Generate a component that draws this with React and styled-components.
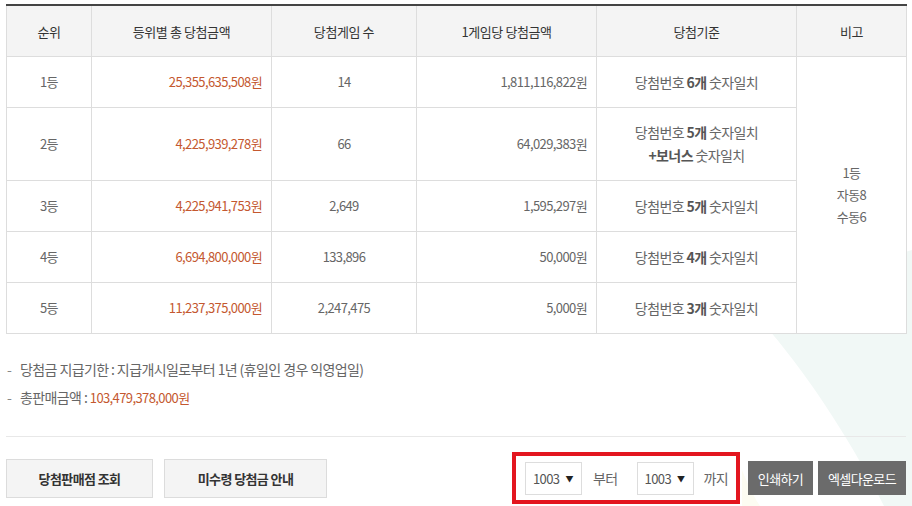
import React from 'react';
import styled, { createGlobalStyle } from 'styled-components';

const GlobalStyle = createGlobalStyle`
  html, body { margin: 0; padding: 0; background: #fff; }
  body {
    font-family: "Noto Sans CJK KR", "Noto Sans", sans-serif;
    color: #666;
    font-size: 13px;
  }
`;

const Page = styled.div`
  position: relative;
  width: 912px;
  height: 506px;
  overflow: hidden;
  padding: 4px 6px 0;
  box-sizing: border-box;
  letter-spacing: -0.6px;
`;

const Backdrop = styled.svg`
  position: absolute;
  left: 0;
  top: 0;
  z-index: 0;
  pointer-events: none;
`;

const Content = styled.div`
  position: relative;
  z-index: 1;
`;

const Table = styled.table`
  width: 900px;
  border-collapse: collapse;
  table-layout: fixed;
  border-top: 2px solid #444;
  background: #fff;
`;

const Th = styled.th`
  height: 50px;
  padding: 0;
  background: #f4f4f4;
  border: 1px solid #ddd;
  border-top: 0;
  color: #333;
  font-weight: normal;
  font-size: 13px;
  letter-spacing: -0.4px;
`;

const Td = styled.td`
  height: ${p => p.$h || 50}px;
  padding: 0 ${p => (p.$align === 'right' ? '9px' : '0')};
  border: 1px solid #ddd;
  text-align: ${p => p.$align || 'center'};
  color: ${p => (p.$accent ? '#c4582f' : '#666')};
  font-size: ${p => p.$fs || 13}px;
  line-height: ${p => p.$lh || 22}px;
  vertical-align: middle;
`;

const Strong = styled.b`
  color: #555;
  font-weight: bold;
`;

const Notes = styled.ul`
  list-style: none;
  margin: 21px 0 0;
  padding: 0 0 24px;
  border-bottom: 1px solid #e8e8e8;
`;

const Note = styled.li`
  position: relative;
  padding-left: 14px;
  line-height: 28px;
  color: #666;
  font-size: 14px;
  &::before {
    content: '-';
    position: absolute;
    left: 1px;
    top: 0;
    color: #888;
  }
`;

const Money = styled.span`
  color: #c4582f;
  font-size: 13px;
`;

const BottomBar = styled.div`
  display: flex;
  align-items: center;
  justify-content: space-between;
  padding-top: 15px;
`;

const Group = styled.div`
  display: flex;
  align-items: center;
  gap: ${p => p.$gap}px;
`;

const LightButton = styled.button`
  width: ${p => p.$w}px;
  height: 39px;
  padding: 0;
  border: 1px solid #dcdcdc;
  background: #f4f4f4;
  color: #333;
  font-family: inherit;
  font-size: 13px;
  font-weight: bold;
  letter-spacing: -0.6px;
`;

const RangeBox = styled.div`
  display: flex;
  align-items: center;
  height: 44px;
  width: 211px;
  padding: 0 0 0 9px;
  box-sizing: content-box;
  border: 4px solid #e3161f;
  margin-right: 3px;
`;

const Select = styled.div`
  display: flex;
  align-items: center;
  width: 57px;
  height: 33px;
  box-sizing: border-box;
  padding-left: 7px;
  border: 1px solid #ddd;
  background: #fff;
  color: #555;
  font-size: 13px;
`;

const Caret = styled.span`
  margin-left: 6px;
  font-size: 8px;
  color: #222;
`;

const RangeLabel = styled.span`
  padding: 0 ${p => p.$pr}px 0 ${p => p.$pl}px;
  color: #666;
  font-size: 14px;
`;

const DarkButton = styled.button`
  width: ${p => p.$w}px;
  height: 34px;
  padding: 0;
  border: 0;
  background: #6b6b6b;
  color: #fff;
  font-family: inherit;
  font-size: 13px;
  letter-spacing: -0.6px;
`;

const rows = [
  { rank: '1등', total: '25,355,635,508원', count: '14', per: '1,811,116,822원', n: '6', h: 50 },
  { rank: '2등', total: '4,225,939,278원', count: '66', per: '64,029,383원', n: '5', bonus: true, h: 72 },
  { rank: '3등', total: '4,225,941,753원', count: '2,649', per: '1,595,297원', n: '5', h: 50 },
  { rank: '4등', total: '6,694,800,000원', count: '133,896', per: '50,000원', n: '4', h: 50 },
  { rank: '5등', total: '11,237,375,000원', count: '2,247,475', per: '5,000원', n: '3', h: 50 },
];

export default function App() {
  return (
    <>
      <GlobalStyle />
      <Page>
        <Backdrop width="912" height="506" viewBox="0 0 912 506">
          <path d="M742 300 C 790 350, 840 420, 884 506 L 912 506 L 912 250 Z" fill="#f1f8f6" />
          <path d="M742 470 C 750 490, 756 500, 760 506 L 742 506 Z" fill="#fdfcf2" />
        </Backdrop>
        <Content>
          <Table>
            <colgroup>
              <col style={{ width: 85 }} />
              <col style={{ width: 180 }} />
              <col style={{ width: 145 }} />
              <col style={{ width: 180 }} />
              <col style={{ width: 200 }} />
              <col style={{ width: 110 }} />
            </colgroup>
            <thead>
              <tr>
                <Th>순위</Th>
                <Th>등위별 총 당첨금액</Th>
                <Th>당첨게임 수</Th>
                <Th>1게임당 당첨금액</Th>
                <Th>당첨기준</Th>
                <Th>비고</Th>
              </tr>
            </thead>
            <tbody>
              {rows.map((r, i) => (
                <tr key={r.rank}>
                  <Td $h={r.h}>{r.rank}</Td>
                  <Td $h={r.h} $align="right" $accent>{r.total}</Td>
                  <Td $h={r.h}>{r.count}</Td>
                  <Td $h={r.h} $align="right">{r.per}</Td>
                  <Td $h={r.h} $lh={23} $fs={14}>
                    당첨번호 <Strong>{r.n}개</Strong> 숫자일치
                    {r.bonus && (
                      <>
                        <br />
                        <Strong>+보너스</Strong> 숫자일치
                      </>
                    )}
                  </Td>
                  {i === 0 && (
                    <Td rowSpan={5}>
                      1등
                      <br />
                      자동8
                      <br />
                      수동6
                    </Td>
                  )}
                </tr>
              ))}
            </tbody>
          </Table>
          <Notes>
            <Note>당첨금 지급기한 : 지급개시일로부터 1년 (휴일인 경우 익영업일)</Note>
            <Note>
              총판매금액 : <Money>103,479,378,000원</Money>
            </Note>
          </Notes>
          <BottomBar>
            <Group $gap={11}>
              <LightButton $w={147}>당첨판매점 조회</LightButton>
              <LightButton $w={163}>미수령 당첨금 안내</LightButton>
            </Group>
            <Group $gap={5}>
              <RangeBox>
                <Select>
                  1003<Caret>▼</Caret>
                </Select>
                <RangeLabel $pl={11} $pr={19}>부터</RangeLabel>
                <Select>
                  1003<Caret>▼</Caret>
                </Select>
                <RangeLabel $pl={10} $pr={0}>까지</RangeLabel>
              </RangeBox>
              <DarkButton $w={65}>인쇄하기</DarkButton>
              <DarkButton $w={88}>엑셀다운로드</DarkButton>
            </Group>
          </BottomBar>
        </Content>
      </Page>
    </>
  );
}
